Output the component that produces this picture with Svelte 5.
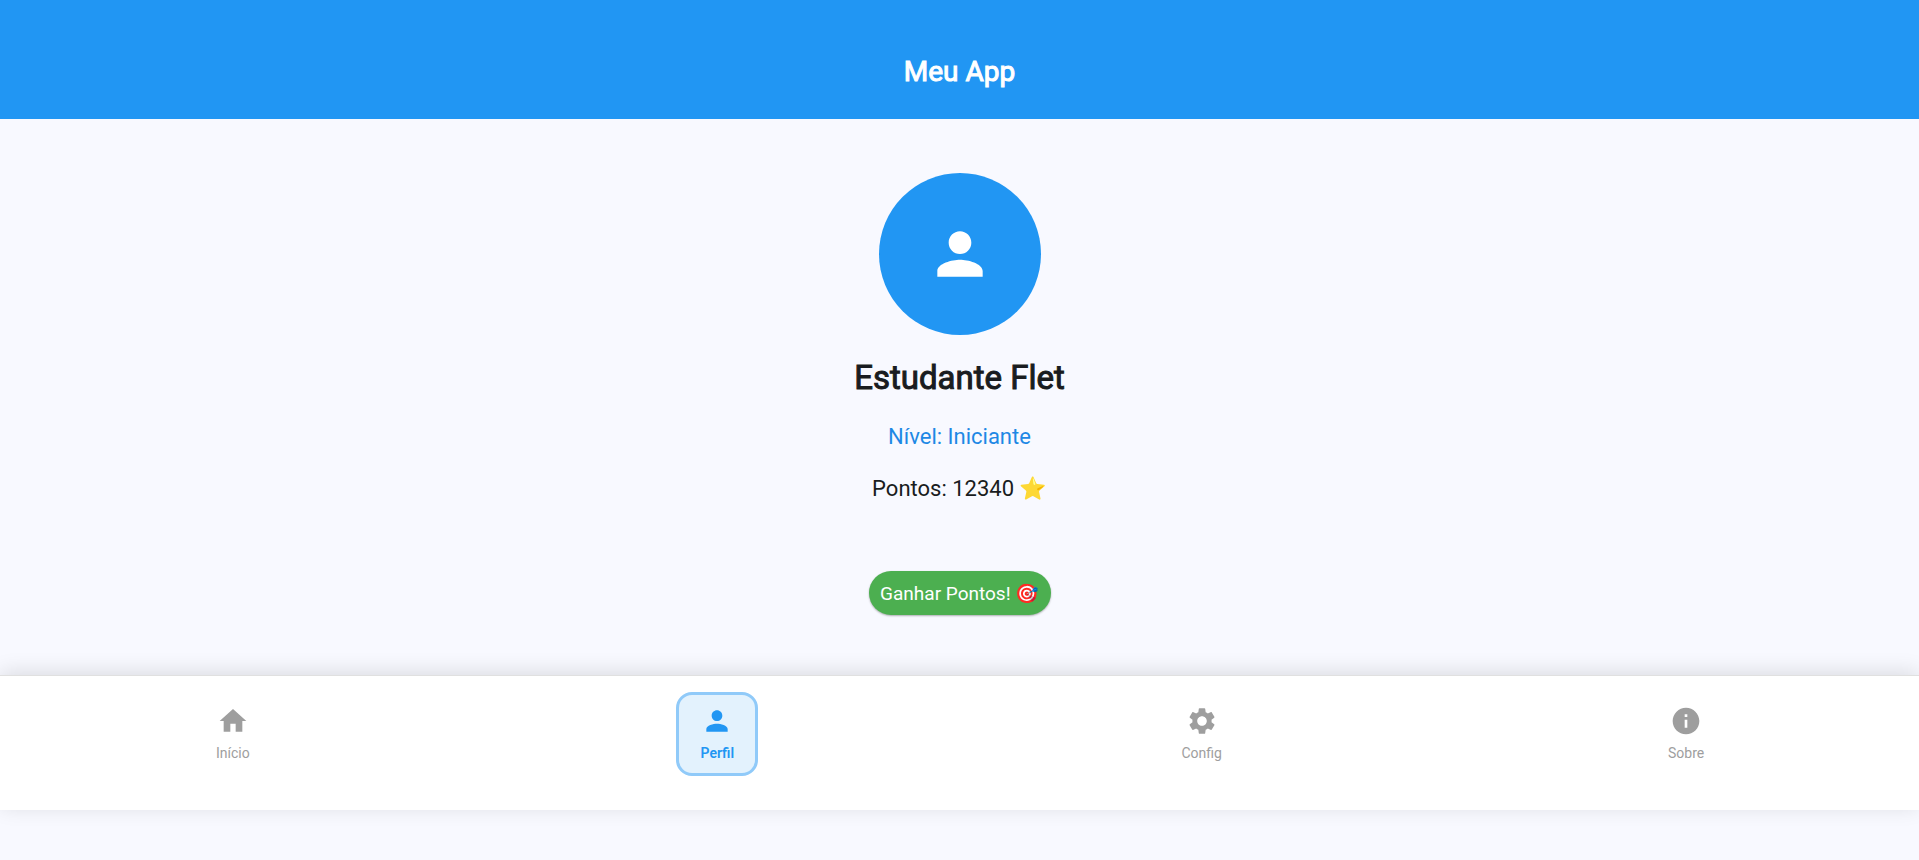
<script>
  let points = $state(12340);
  let active = $state('perfil');

  const person =
    'M12 12c2.21 0 4-1.79 4-4s-1.79-4-4-4-4 1.79-4 4 1.79 4 4 4zm0 2c-2.67 0-8 1.34-8 4v2h16v-2c0-2.66-5.33-4-8-4z';

  const tabs = [
    { id: 'inicio', label: 'Início', icon: 'M10 20v-6h4v6h5v-8h3L12 3 2 12h3v8z' },
    { id: 'perfil', label: 'Perfil', icon: person },
    {
      id: 'config',
      label: 'Config',
      icon: 'M19.14 12.94c.04-.3.06-.61.06-.94 0-.32-.02-.64-.07-.94l2.03-1.58c.18-.14.23-.41.12-.61l-1.92-3.32c-.12-.22-.37-.29-.59-.22l-2.39.96c-.5-.38-1.03-.7-1.62-.94l-.36-2.54c-.04-.24-.24-.41-.48-.41h-3.84c-.24 0-.43.17-.47.41l-.36 2.54c-.59.24-1.13.57-1.62.94l-2.39-.96c-.22-.08-.47 0-.59.22L2.74 8.87c-.12.21-.08.47.12.61l2.03 1.58c-.05.3-.09.63-.09.94s.02.64.07.94l-2.03 1.58c-.18.14-.23.41-.12.61l1.92 3.32c.12.22.37.29.59.22l2.39-.96c.5.38 1.03.7 1.62.94l.36 2.54c.05.24.24.41.48.41h3.84c.24 0 .44-.17.47-.41l.36-2.54c.59-.24 1.13-.56 1.62-.94l2.39.96c.22.08.47 0 .59-.22l1.92-3.32c.12-.22.07-.47-.12-.61l-2.01-1.58zM12 15.6c-1.98 0-3.6-1.62-3.6-3.6s1.62-3.6 3.6-3.6 3.6 1.62 3.6 3.6-1.62 3.6-3.6 3.6z'
    },
    {
      id: 'sobre',
      label: 'Sobre',
      icon: 'M12 2C6.48 2 2 6.48 2 12s4.48 10 10 10 10-4.48 10-10S17.52 2 12 2zm1 15h-2v-6h2v6zm0-8h-2V7h2v2z'
    }
  ];
</script>

<div class="app">
  <header>
    <h1>Meu App</h1>
  </header>

  <main>
    <div class="avatar">
      <svg viewBox="0 0 24 24" aria-hidden="true"><path d={person} /></svg>
    </div>
    <h2>Estudante Flet</h2>
    <p class="level">Nível: Iniciante</p>
    <p class="points">Pontos: {points} ⭐</p>
    <button class="earn" onclick={() => (points += 10)}>Ganhar Pontos! 🎯</button>
  </main>

  <nav>
    {#each tabs as tab (tab.id)}
      <button class="tab" class:active={active === tab.id} onclick={() => (active = tab.id)}>
        <svg viewBox="0 0 24 24" aria-hidden="true"><path d={tab.icon} /></svg>
        <span>{tab.label}</span>
      </button>
    {/each}
  </nav>
</div>

<style>
  :global(body) {
    margin: 0;
    background: #f8f9ff;
  }

  .app {
    min-height: 100vh;
    overflow: hidden;
    font-family: Roboto, 'Noto Color Emoji', sans-serif;
    color: #191c20;
  }

  header {
    padding: 54px 16px 29px;
    background: #2196f3;
    color: #fff;
    text-align: center;
  }

  h1,
  h2,
  p {
    margin: 0;
  }

  h1,
  h2 {
    font-weight: 400;
    -webkit-text-stroke: 1px currentColor;
  }

  h1 {
    font-size: 28px;
    line-height: 36px;
  }

  main {
    display: flex;
    flex-direction: column;
    align-items: center;
    padding: 54px 16px 60px;
  }

  .avatar {
    display: grid;
    place-items: center;
    width: 162px;
    height: 162px;
    border-radius: 50%;
    background: #2196f3;
  }

  svg {
    display: block;
    fill: currentColor;
  }

  .avatar svg {
    width: 68px;
    height: 68px;
    color: #fff;
  }

  h2 {
    margin-top: 20px;
    font-size: 33px;
    line-height: 46px;
  }

  p {
    font-size: 22px;
    line-height: 32px;
  }

  .level {
    margin-top: 20px;
    color: #1e88e5;
  }

  .points {
    margin-top: 20px;
  }

  button {
    border: 0;
    font-family: inherit;
    cursor: pointer;
  }

  .earn {
    margin-top: 66px;
    min-width: 182px;
    height: 44px;
    padding: 0 11px;
    border-radius: 22px;
    background: #4caf50;
    color: #fff;
    font-size: 19px;
    line-height: 27px;
    font-weight: 400;
    box-shadow: 0 1px 2px rgba(0, 0, 0, 0.3);
  }

  nav {
    display: flex;
    justify-content: space-between;
    padding: 16px 10% 34px;
    border-top: 1px solid #e0e0e0;
    background: #fff;
    box-shadow: 0 -3px 20px rgba(0, 0, 0, 0.12);
  }

  .tab {
    display: flex;
    flex-direction: column;
    align-items: center;
    gap: 6px;
    box-sizing: border-box;
    min-width: 82px;
    padding: 10px 8px;
    border: 3px solid transparent;
    border-radius: 16px;
    background: transparent;
    color: #9e9e9e;
    font-size: 14px;
    line-height: 20px;
  }

  .tab svg {
    width: 32px;
    height: 32px;
  }

  .tab.active {
    border-color: #90caf9;
    background: #e3f2fd;
    color: #2196f3;
    font-weight: 600;
  }
</style>
